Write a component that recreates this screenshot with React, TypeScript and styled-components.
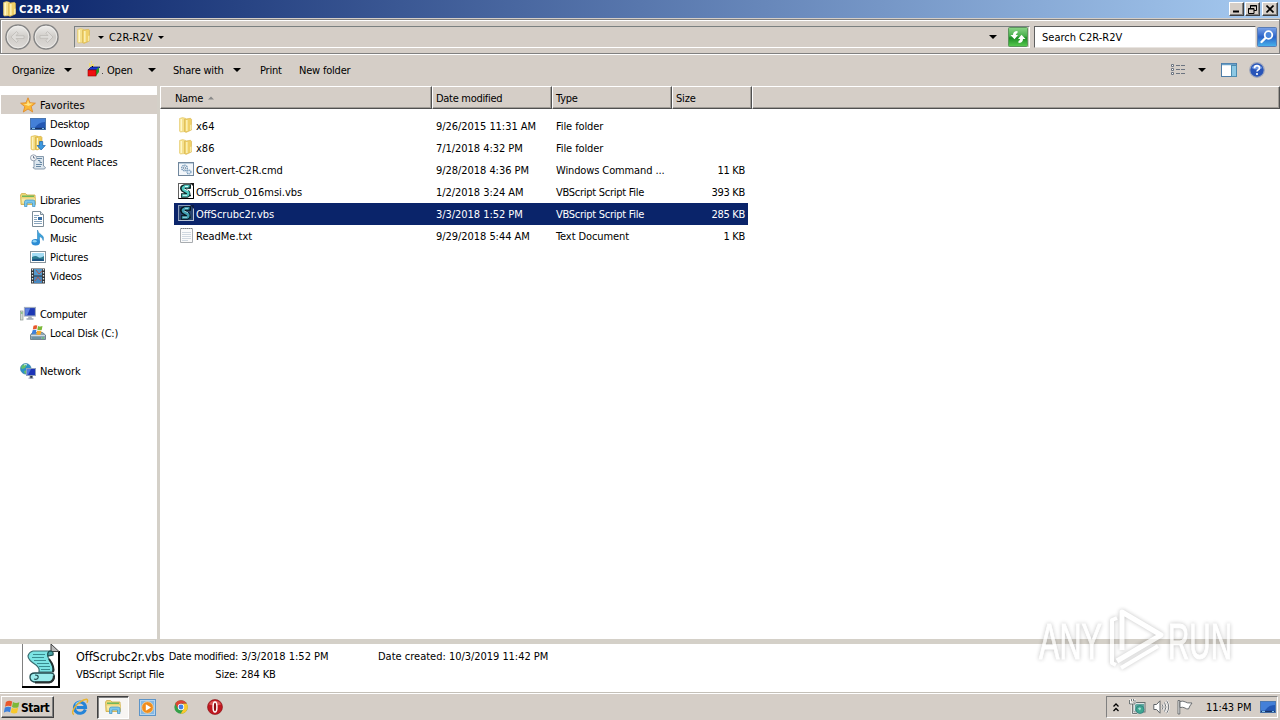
import React from 'react'
import styled, { createGlobalStyle, css } from 'styled-components'

const face = '#d5cec7'
const navy = '#0a246a'
const shadow = '#808080'

const GlobalStyle = createGlobalStyle`
  * { box-sizing: border-box; }
  body {
    margin: 0;
    background: ${face};
    color: #000;
    font-family: 'DejaVu Sans Condensed', 'DejaVu Sans', sans-serif;
    font-stretch: condensed;
    font-size: 11px;
  }
  svg { display: block; flex: none; }
`

const Desktop = styled.div`
  position: relative;
  display: flex;
  flex-direction: column;
  width: 1280px;
  height: 720px;
  overflow: hidden;
`

const Label = styled.span<{ $track?: number }>`
  display: block;
  padding-top: 2px;
  white-space: pre;
  line-height: 16px;
  letter-spacing: ${({ $track }) => $track ?? -0.2}px;
`

/* title bar */

const TitleBar = styled.div`
  display: flex;
  flex: none;
  align-items: center;
  height: 18px;
  padding: 0 2px 0 2px;
  background: linear-gradient(90deg, ${navy}, #a6caf0);
  color: #fff;
  font-weight: bold;
`

const TitleText = styled(Label)`
  flex: 1;
  padding-left: 1px;
`

const raised = css`
  background: ${face};
  border: 1px solid;
  border-color: #fff #404040 #404040 #fff;
  box-shadow: inset -1px -1px 0 ${shadow};
`

const CaptionButton = styled.div<{ $gap?: boolean }>`
  ${raised}
  display: flex;
  align-items: center;
  justify-content: center;
  width: ${({ $gap }) => ($gap ? 16 : 15)}px;
  height: 14px;
  margin-left: ${({ $gap }) => ($gap ? 2 : 1)}px;
`

/* address bar */

const AddressBar = styled.div`
  display: flex;
  flex: none;
  align-items: center;
  height: 35px;
  margin-top: 1px;
  padding: 1px 0 0 3px;
  border: 1px solid ${shadow};
  box-shadow: inset 1px 1px 0 #fff, 0 1px 0 #fff;
`

const AddressField = styled.div`
  display: flex;
  align-items: center;
  width: 956px;
  height: 22px;
  margin-left: 14px;
  padding: 0 1px;
  border: 1px solid;
  border-color: #7a8080 #fff #fff #7a8080;
`

const FieldIcon = styled.div`
  padding-bottom: 2px;
`

const SearchField = styled.div`
  display: flex;
  align-items: center;
  width: 222px;
  height: 22px;
  margin: 0 1px 0 4px;
  padding-left: 7px;
  background: #fff;
  border: 1px solid;
  border-color: #606060 #e8e4e0 #e8e4e0 #606060;
`

const Spacer = styled.div`
  flex: 1;
`

const Caret = styled.i<{ $size?: number; $left?: number; $right?: number }>`
  width: 0;
  height: 0;
  margin-left: ${({ $left }) => $left || 0}px;
  margin-right: ${({ $right }) => $right || 0}px;
  border: ${({ $size }) => $size || 4}px solid transparent;
  border-top-color: #000;
  border-bottom-width: 0;
`

/* toolbar */

const Toolbar = styled.div`
  display: flex;
  flex: none;
  align-items: center;
  height: 32px;
  padding: 0 15px 0 12px;
`

const ToolItem = styled.div<{ $width: number }>`
  display: flex;
  align-items: center;
  width: ${({ $width }) => $width}px;
`

/* body */

const Body = styled.div`
  display: flex;
  flex: none;
  height: 553px;
`

const NavPane = styled.div`
  width: 157px;
  padding-top: 9px;
  background: #fff;
`

const NavRow = styled.div<{ $child?: boolean; $selected?: boolean }>`
  display: flex;
  align-items: center;
  gap: 4px;
  height: 19px;
  margin-left: 1px;
  padding-left: ${({ $child }) => ($child ? 29 : 19)}px;
  background: ${({ $selected }) => ($selected ? face : 'transparent')};

  ${Label} {
    padding-top: 3px;
  }
`

const NavGap = styled.div`
  height: 19px;
`

const Splitter = styled.div`
  width: 3px;
  background: #d4d0c8;
`

const ListPane = styled.div`
  flex: 1;
  background: #fff;
`

const HeaderRow = styled.div`
  display: flex;
  height: 23px;
`

const HeaderCell = styled.div<{ $width?: number; $pad?: number }>`
  display: flex;
  align-items: center;
  gap: 5px;
  flex: ${({ $width }) => ($width ? `0 0 ${$width}px` : 1)};
  padding: 1px 0 0 ${({ $pad }) => $pad ?? 3}px;
  background: ${face};
  border: 1px solid;
  border-color: #fff #505050 #505050 #fff;
  box-shadow: inset -1px -1px 0 #a09c96;
`

const Rows = styled.div`
  padding: 6px 0 0 14px;
`

const FileRow = styled.div<{ $selected?: boolean }>`
  display: grid;
  grid-template-columns: 262px 120px 114px 78px;
  align-items: center;
  width: 574px;
  height: 22px;
  color: ${({ $selected }) => ($selected ? '#fff' : '#000')};
  background: ${({ $selected }) => ($selected ? navy : 'transparent')};
`

const NameCell = styled.div`
  display: flex;
  align-items: center;
  gap: 2px;
  padding-left: 4px;

  svg {
    margin-bottom: 2px;
  }
`

const SizeCell = styled.div`
  padding-right: 3px;
  text-align: right;
`

/* details pane */

const DetailsPane = styled.div`
  display: flex;
  flex: none;
  height: 54px;
  border-top: 5px solid #d4d0c8;
  border-bottom: 1px solid #c4c0b8;
  background: #fff;
`

const DetailIcon = styled.div`
  padding-left: 21px;
  width: 76px;
`

const DetailColumn = styled.div<{ $width: number; $right?: boolean }>`
  display: flex;
  flex-direction: column;
  width: ${({ $width }) => $width}px;
  padding-top: 3px;
  text-align: ${({ $right }) => ($right ? 'right' : 'left')};
`

const FileTitle = styled(Label)`
  font-size: 12.5px;
`

/* taskbar */

const Taskbar = styled.div`
  display: flex;
  flex: none;
  align-items: center;
  height: 27px;
  padding: 0 2px 0 1px;
  border-top: 1px solid #fff;
`

const StartButton = styled.div`
  ${raised}
  display: flex;
  align-items: center;
  gap: 1px;
  width: 53px;
  height: 22px;
  margin-right: 12px;
  padding-left: 2px;
  font-size: 12px;
  font-weight: bold;
`

const TaskButton = styled.div<{ $active?: boolean; $gap: number }>`
  display: flex;
  align-items: center;
  justify-content: center;
  width: ${({ $active }) => ($active ? 32 : 28)}px;
  height: 23px;
  margin-right: ${({ $gap }) => $gap}px;
  border: 1px solid transparent;
  ${({ $active }) =>
    $active &&
    css`
      background: #f7f5f2;
      border-color: #404040 #fff #fff #404040;
      box-shadow: inset 1px 1px 0 ${shadow};
    `}
`

const Tray = styled.div`
  display: flex;
  align-items: center;
  width: 172px;
  height: 22px;
  padding-left: 6px;
  border: 1px solid;
  border-color: ${shadow} #fff #fff ${shadow};
`

const TrayIcon = styled.div<{ $width: number }>`
  width: ${({ $width }) => $width}px;
`

const Watermark = styled.div`
  position: absolute;
  left: 1034px;
  top: 604px;
  opacity: 0.7;
  filter: drop-shadow(0 0 2px rgba(0, 0, 0, 0.34));
`

/* icons */

const FolderIcon = () => (
  <svg width="16" height="16" viewBox="0 0 16 16">
    <path d="M1.500 1.500 4.500.5l3 .8V14.500l-5 .5-1-.8z" fill="#f5e08c" stroke="#e4c866" strokeWidth=".6" />
    <path d="M6.500 2.200 12.500 1.300l1 1V13l-5.500 2.400-1.500-.8z" fill="#efd068" stroke="#d4b04c" strokeWidth=".6" />
    <path d="M3.300 2v12" stroke="#fff6c8" strokeWidth="1.500" />
    <path d="M8.800 3v11" stroke="#fbeeb0" strokeWidth="1.700" />
    <path d="M12 8l1.500-.5v5L12 13.500z" fill="#f8e8a4" />
  </svg>
)

const NavCircle = ({ forward }: { forward?: boolean }) => (
  <svg width="28" height="28" viewBox="0 0 28 28">
    <defs>
      <linearGradient id="disc" x1="0" y1="0" x2="0" y2="1">
        <stop offset="0" stopColor="#f0efed" />
        <stop offset=".5" stopColor="#cfccc8" />
        <stop offset="1" stopColor="#dedbd8" />
      </linearGradient>
    </defs>
    <circle cx="14" cy="14" r="12" fill="url(#disc)" stroke="#858585" strokeWidth="1.500" />
    <circle cx="14" cy="14" r="10.800" fill="none" stroke="#f2f1ef" strokeWidth=".8" />
    <path
      transform={forward ? 'rotate(180 14 14)' : undefined}
      d="M7 14l5.500-5.500 1.700 1.700L12 12.700h8v2.800h-8l2.200 2.300-1.700 1.700z"
      fill="#dedcd9"
      stroke="#bab7b3"
      strokeWidth=".7"
    />
  </svg>
)

const RefreshIcon = () => (
  <svg width="20" height="20" viewBox="0 0 20 20">
    <defs>
      <linearGradient id="leaf" x1="0" y1="0" x2="0" y2="1">
        <stop offset="0" stopColor="#8cd488" />
        <stop offset=".45" stopColor="#48b04c" />
        <stop offset=".55" stopColor="#1c8c24" />
        <stop offset="1" stopColor="#58cc50" />
      </linearGradient>
    </defs>
    <rect x=".5" y=".5" width="19" height="19" rx="1" fill="url(#leaf)" stroke="#5c945c" />
    <path d="M9.500 4Q5 4 5 8H2.500L6.500 12.300 10 8H7.800Q8 6.300 9.500 6z" fill="#fff" />
    <path d="M10.500 16Q15 16 15 12H17.500L13.500 7.700 10 12H12.200Q12 13.700 10.500 14z" fill="#fff" />
  </svg>
)

const SearchIcon = () => (
  <svg width="20" height="20" viewBox="0 0 20 20">
    <defs>
      <linearGradient id="glass" x1="0" y1="0" x2="0" y2="1">
        <stop offset="0" stopColor="#7da4e8" />
        <stop offset=".5" stopColor="#2a62c8" />
        <stop offset="1" stopColor="#48b4ec" />
      </linearGradient>
    </defs>
    <rect x=".5" y=".5" width="19" height="19" rx="1" fill="url(#glass)" stroke="#5a7cb4" />
    <circle cx="11.500" cy="8" r="3.800" fill="#4a86dc" stroke="#fff" strokeWidth="1.800" />
    <path d="M8.500 11 4.500 15" stroke="#fff" strokeWidth="2.400" strokeLinecap="round" />
  </svg>
)

const OpenIcon = () => (
  <svg width="18" height="18" viewBox="0 0 18 18">
    <path d="M2 3h1M4 1h1M4 4h3M2 5h2M6 6h1" stroke="#f4e060" strokeWidth="1.300" />
    <path d="M5 5.500h1" stroke="#000" />
    <path d="M1 9l3-3h9l-3 3z" fill="#1438d8" stroke="#001060" strokeWidth=".7" />
    <path d="M9 9l3-3v5l-3 4z" fill="#28982c" />
    <rect x="1" y="9" width="8" height="6" fill="#f01010" stroke="#900" strokeWidth=".6" />
    <path d="M15 12.500h1" stroke="#444" />
  </svg>
)

const ViewIcon = () => (
  <svg width="16" height="14" viewBox="0 0 16 14" fill="none" stroke="#6c7480">
    <path d="M1.500 1.500h2v2h-2zM1.500 5.500h2v2h-2zM1.500 9.500h2v2h-2z" fill="#fff" />
    <path d="M6 2.500h4m1 0h4M6 6.500h4m1 0h4M6 10.500h4m1 0h4" />
  </svg>
)

const PreviewIcon = () => (
  <svg width="17" height="14" viewBox="0 0 17 14">
    <rect x=".5" y=".5" width="15" height="13" fill="#fff" stroke="#4c7ca8" />
    <path d="M1 1.500h14" stroke="#68a0c8" strokeWidth="1.500" />
    <rect x="10.500" y="2.500" width="5" height="11" fill="#8cc8e4" stroke="#4c8cb0" />
  </svg>
)

const HelpIcon = () => (
  <svg width="16" height="16" viewBox="0 0 16 16">
    <circle cx="8" cy="8" r="7.300" fill="#2854b8" stroke="#a0a8bc" strokeWidth="1.200" />
    <path d="M2.500 6a6 5 0 0 1 11 0q-5 3-11 0z" fill="#6c94e0" />
    <path d="M5.500 6.200c0-3.400 5-3.200 5-.3C10.500 8 8 7.700 8 9.600" fill="none" stroke="#fff" strokeWidth="1.700" />
    <circle cx="8" cy="12" r="1.100" fill="#fff" />
  </svg>
)

const StarIcon = () => (
  <svg width="16" height="16" viewBox="0 0 16 16">
    <path
      d="M8 .8l2 5 5.400.4-4.200 3.400 1.500 5.400L8 12l-4.700 3 1.500-5.400L.6 6.200 6 5.800z"
      fill="#fcb834"
      stroke="#e08c2c"
      strokeWidth=".9"
    />
    <path d="M8 3l1 3.600H13L8.500 9 3.500 7H7z" fill="#fee488" />
  </svg>
)

const MonitorIcon = () => (
  <svg width="16" height="16" viewBox="0 0 16 16">
    <rect x=".5" y="2.500" width="15" height="11" fill="#2458b4" stroke="#4c78b0" />
    <path d="M1 3h14v3Q8 6 4 13H1z" fill="#4480d8" />
    <path d="M1 12.500h14" stroke="#183468" strokeWidth="1.400" />
    <path d="M2 12.500h3M12 12.500h2" stroke="#80c0ec" />
  </svg>
)

const DownloadsIcon = () => (
  <svg width="16" height="16" viewBox="0 0 16 16">
    <path d="M1 1.500 5 .5l3 .8V14l-5 1-2-.8z" fill="#f3dc80" stroke="#dcb94e" strokeWidth=".6" />
    <path d="M5.500 2 11 1.300l1 1V13l-5 2-1.500-.8z" fill="#ecca5a" stroke="#d0a93c" strokeWidth=".6" />
    <path d="M2.700 2v12M7.500 3v11" stroke="#fff6c8" strokeWidth="1.200" />
    <path d="M9.500 6.500h3.200v4h2.600L11.100 15 7 10.500h2.500z" fill="#3c98e0" stroke="#1c64ac" strokeWidth=".7" />
  </svg>
)

const RecentIcon = () => (
  <svg width="16" height="16" viewBox="0 0 16 16">
    <path d="M4 2.500h9.500v9.500l2 1.500-1 1.500H4.500L3 13.500h1z" fill="#dce6ee" stroke="#7c90a4" strokeWidth=".9" />
    <path d="M7 4.500h5M8 6.500h2v2h2M6 10.500h6M6 12.500h5" fill="none" stroke="#6888a4" />
    <circle cx="3.500" cy="3.800" r="3" fill="#f4f6f8" stroke="#8c98a8" strokeWidth=".9" />
    <path d="M3.500 2v2h1.500" fill="none" stroke="#506078" strokeWidth=".8" />
  </svg>
)

const LibraryIcon = () => (
  <svg width="16" height="16" viewBox="0 0 16 16">
    <path d="M.6 3 1.500 1.600h4L7 3h8l.4 9.500H1z" fill="#f4dc7c" stroke="#cca840" strokeWidth=".8" />
    <path d="M2 4.200h12" stroke="#58b058" strokeWidth="1.300" />
    <path d="M1 6h14.500l-.6 6H2z" fill="#f9eaa4" stroke="#dcc060" strokeWidth=".6" />
    <path d="M4.500 14.500V9.800q0-1.800 2-1.800h6.500q2 0 2 1.800v4.700h-2.500V11H7v3.500z" fill="#7cc8ec" stroke="#3c90c4" strokeWidth=".7" />
  </svg>
)

const DocumentIcon = () => (
  <svg width="16" height="16" viewBox="0 0 16 16">
    <path d="M2.500.5h8l3 3v12h-11z" fill="#fff" stroke="#7c8c98" />
    <path d="M10.500.5v3h3" fill="#dce4ea" stroke="#7c8c98" />
    <path d="M4 4.500h5M4 6.500h3M4 8.500h3M4 10.500h8M4 12.500h8" stroke="#88a4bc" />
    <rect x="8" y="6" width="4" height="3" fill="#346ca4" />
  </svg>
)

const MusicIcon = () => (
  <svg width="16" height="16" viewBox="0 0 16 16">
    <path d="M7.500 0q.5 3 3.500 4.500 3.500 2 2.200 6Q12.500 7 9.500 6.500V12h-2z" fill="#3ca4dc" stroke="#1c74b4" strokeWidth=".5" />
    <ellipse cx="5.700" cy="12.200" rx="4.200" ry="3.200" fill="#2c8cd4" />
    <ellipse cx="4.700" cy="11.300" rx="2" ry="1.200" fill="#90d4f4" />
  </svg>
)

const PictureIcon = () => (
  <svg width="16" height="16" viewBox="0 0 16 16">
    <rect x=".5" y="2.500" width="15" height="11" fill="#fff" stroke="#88949c" />
    <rect x="2" y="4" width="12" height="8" fill="#a4dcf4" />
    <path d="M2 8q4-2 6 0t6-1v5H2z" fill="#2c7c90" />
    <path d="M2 10.500q6-1.500 12 0V12H2z" fill="#1c5484" />
  </svg>
)

const VideoIcon = () => (
  <svg width="16" height="16" viewBox="0 0 16 16">
    <rect x="1" y=".5" width="14" height="15" fill="#303438" />
    <rect x="4" y="1" width="8" height="6.500" fill="#5498cc" />
    <rect x="4" y="8.500" width="8" height="6.500" fill="#4888c0" />
    <path d="M6 2l3 4 3-3M5 13l3-4 3 4" stroke="#b0584c" fill="none" />
    <path d="M2.500 1v14M13.500 1v14" stroke="#e4e8ec" strokeWidth="1.300" strokeDasharray="1.500 1.500" />
  </svg>
)

const ComputerIcon = () => (
  <svg width="16" height="16" viewBox="0 0 16 16">
    <rect x=".5" y="5" width="2.500" height="9" fill="#d4dcd4" stroke="#8c9890" strokeWidth=".7" />
    <path d="M1 7h1.500" stroke="#40b040" />
    <rect x="4.500" y="1.500" width="11" height="8.500" fill="#1c38b4" stroke="#a0acc0" strokeWidth="1.200" />
    <path d="M5.200 2.200h5L7 9.400H5.200z" fill="#5c80e0" />
    <path d="M8.500 10.500h3l.5 2H8z" fill="#a8b0bc" />
    <path d="M6.500 13h7" stroke="#8c98a8" strokeWidth="1.300" />
  </svg>
)

const DiskIcon = () => (
  <svg width="16" height="16" viewBox="0 0 16 16">
    <path d="M.5 10l2-2.500h10l3 2.500v4.500H.5z" fill="#8ca4b4" stroke="#60747f" strokeWidth=".8" />
    <path d="M1 10.500h14" stroke="#d0dce4" />
    <path d="M2 13h9" stroke="#5c8898" strokeWidth="1.200" />
    <path d="M12 13h2" stroke="#50d050" strokeWidth="1.200" />
    <path d="M3.500.8Q5.500-.3 7.300.6L6.500 4.300Q5 3.600 2.800 4.600z" fill="#e8582c" />
    <path d="M8 .9q2 1 4.500.2L11.700 5q-2.200.8-4.400-.3z" fill="#7cb838" />
    <path d="M2.600 5.300q2-1 3.800-.2L5.700 9q-2-.8-4 .2z" fill="#3c80dc" />
    <path d="M7.100 5.500q2 1 4.400.2L10.700 9.600q-2.200.8-4.400-.3z" fill="#f8a82c" />
  </svg>
)

const NetworkIcon = () => (
  <svg width="16" height="16" viewBox="0 0 16 16">
    <circle cx="5.800" cy="5.800" r="5.300" fill="#2c90c8" stroke="#4080a8" strokeWidth=".7" />
    <path d="M2 2.500q3-2 5-1L5 5 2.500 6 1 5zM4 8l3-1 1 2-3 2z" fill="#64c06c" />
    <path d="M4 2q2-1 3 0" stroke="#d8f4f8" fill="none" />
    <rect x="6.500" y="5.500" width="9" height="7" fill="#1c34b8" stroke="#90a0bc" />
    <path d="M7 6h4l-3 6H7z" fill="#5078e0" />
    <path d="M10 13h2.500v2H10zM8.500 15.200h5" stroke="#7c88a0" strokeWidth=".8" />
  </svg>
)

const CmdIcon = () => (
  <svg width="16" height="16" viewBox="0 0 16 16">
    <rect x=".5" y="1.500" width="15" height="13" fill="#f2f6fa" stroke="#70869c" />
    <path d="M1 2.500h14" stroke="#b8ccdc" />
    <circle cx="6.500" cy="7" r="2.800" fill="#fff" stroke="#7498b8" strokeWidth="1.400" strokeDasharray="1.500 .6" />
    <circle cx="6.500" cy="7" r="1.200" fill="none" stroke="#587898" strokeWidth=".7" />
    <circle cx="11" cy="11" r="2" fill="#dce8f4" stroke="#7498b8" strokeWidth="1.200" strokeDasharray="1.200 .5" />
  </svg>
)

const ScriptIcon = ({ selected }: { selected?: boolean }) => (
  <svg width="16" height="16" viewBox="0 0 16 16">
    <rect x=".5" y=".5" width="15" height="15" fill={selected ? '#284470' : '#fff'} stroke={selected ? '#8c9cb8' : '#606060'} />
    <path d="M15.500 2v13.500H.5" fill="none" stroke={selected ? '#b8c4d4' : '#000'} />
    <path d="M12 0h4v4z" fill={selected ? '#0c1c44' : '#181818'} />
    <path
      d="M13 3.500H6.500Q3 4.500 5 6.800L9.800 9.500q1 2.500-.8 3H3"
      fill="none"
      stroke={selected ? '#04141c' : '#0c2828'}
      strokeWidth="4.600"
    />
    <path d="M11.500 3.400H7Q3.800 4.500 5.500 6.800L10 9.300q1 2.500-1 3.200H3.800" fill="none" stroke={selected ? '#409cb0' : '#50c8c0'} strokeWidth="2.600" />
    <path d="M7 3.500h3M6 5.800l4 2M5 12.300h4" stroke={selected ? '#a0dce4' : '#e8ffff'} strokeWidth=".9" />
    <path d="M10.500 5.500l1.500-1M11 12.500h2" stroke="#0c2828" strokeWidth="1.500" />
  </svg>
)

const TextIcon = () => (
  <svg width="16" height="16" viewBox="0 0 16 16">
    <path d="M2.500 1.500h12v14h-12z" fill="#fafafa" stroke="#a8acb0" />
    <path d="M3 1.500h11" stroke="#787c80" strokeDasharray="1 1" />
    <path d="M4 5.500h9M4 7.500h9M4 9.500h9M4 11.500h9M4 13.500h6" stroke="#d0d8e0" />
  </svg>
)

const BigScriptIcon = () => (
  <svg width="40" height="45" viewBox="0 0 40 45">
    <path d="M1 0h29l8 8v35.500H1z" fill="#fff" />
    <path d="M1.500 0v43" stroke="#808080" />
    <path d="M38 7v36H1" fill="none" stroke="#000" strokeWidth="2" />
    <path d="M30 0v7.500h8z" fill="#b8b8b8" stroke="#404040" />
    <path
      d="M12 7h17q-4 4-1 8 5 8 4 13H18q1-4-3-7-8-5-8-9 1-4 5-5z"
      fill="#7ce4e4"
      stroke="#386c70"
      strokeWidth="1.200"
    />
    <path d="M29 7q4 0 3 4l-5 1q-1-4 2-5z" fill="#48a0a4" stroke="#184848" strokeWidth="1.100" />
    <path d="M28 15q6 8 4 13" fill="none" stroke="#203030" strokeWidth="2" />
    <path d="M14 29h16q4 0 3 5-1 4-5 4H13q-4-1-4-5t5-4z" fill="#9cecec" stroke="#204c50" strokeWidth="1.300" />
    <path d="M14 31q4 0 3 3-1 2-4 1" fill="none" stroke="#204c50" strokeWidth="1.200" />
    <path d="M12 10.500h12M11 13.500h12M13 16.500h12M16 19.500h12M18 22.500h11M20 25.500h9" stroke="#388c90" strokeWidth="1.100" />
    <path d="M14 38.500h14q5-1 5-7" fill="none" stroke="#283030" strokeWidth="2.200" />
  </svg>
)

const WindowsFlag = () => (
  <svg width="16" height="16" viewBox="-1.500 -1 17 17">
    <path d="M.5 2.200Q4-.1 7.200 1.700L6.200 7Q3 5.300-.4 7.300z" fill="#e8582c" />
    <path d="M8 2.200q3 1.800 6.800.2L13.700 7.700Q10.300 9.200 7 7.400z" fill="#7cb838" />
    <path d="M-.6 8.100Q3 6.300 6 7.800L4.900 13.100Q2 11.500-1.700 13.400z" fill="#3c80dc" />
    <path d="M6.800 8.200q3 1.700 6.700.2l-1.100 5.300q-3.300 1.500-6.700-.3z" fill="#f8c82c" />
  </svg>
)

const IeIcon = () => (
  <svg width="18" height="18" viewBox="0 0 18 18">
    <path d="M14.300 11.500A5.600 5.600 0 1 1 14.600 9.500H5.500" fill="none" stroke="#2484d8" strokeWidth="3" />
    <path d="M4.500 6.500Q6 4 9 3.600" stroke="#8cd0f8" strokeWidth="1.300" fill="none" />
    <path d="M3 16.500Q-.3 15.500 4 9 9.500 2 15.500 1.200q2 .3.500 3.500" fill="none" stroke="#e8b430" strokeWidth="1.400" />
  </svg>
)

const WmpIcon = () => (
  <svg width="17" height="17" viewBox="0 0 17 17">
    <rect x=".5" y=".5" width="16" height="16" fill="#b4d4f0" stroke="#5c94c8" />
    <rect x="2" y="2" width="13" height="13" fill="#84b8e4" />
    <circle cx="8.500" cy="8.500" r="5.800" fill="#f08c1c" stroke="#fcd8a0" strokeWidth=".8" />
    <path d="M6.800 5.200 12 8.500l-5.200 3.300z" fill="#fff" />
  </svg>
)

const ChromeIcon = () => (
  <svg width="14" height="14" viewBox="0 0 14 14">
    <circle cx="7" cy="7" r="6.700" fill="#34a048" />
    <path d="M1.200 3.700A6.700 6.700 0 0 1 12.900 3.800H7L4.200 8.800z" fill="#dc4434" />
    <path d="M12.900 3.800A6.700 6.700 0 0 1 6.700 13.700L9.800 8.500 9 3.800z" fill="#fcc82c" />
    <circle cx="7" cy="7" r="3.200" fill="#fff" />
    <circle cx="7" cy="7" r="2.400" fill="#4080e4" />
  </svg>
)

const OperaIcon = () => (
  <svg width="16" height="16" viewBox="0 0 16 16">
    <circle cx="8" cy="8" r="7.500" fill="#c01820" stroke="#841014" strokeWidth=".6" />
    <path d="M2 5.500a6.500 6 0 0 1 12 0q-6 2-12 0z" fill="#dc5858" />
    <ellipse cx="8" cy="8" rx="1.900" ry="5" fill="#8c0c10" stroke="#fff" strokeWidth="1.500" />
  </svg>
)

const TrayNetwork = () => (
  <svg width="17" height="16" viewBox="0 0 17 16">
    <rect x="4.500" y="3.500" width="11.500" height="9.500" fill="#dce4e4" stroke="#687070" />
    <rect x="6" y="5" width="9" height="7" fill="#60a8a0" />
    <path d="M1 .500v4h5v-4M3.500 5v9.500H8M2.500 0v2M4.500 0v2" fill="none" stroke="#f8f8f8" strokeWidth="2.200" />
    <path d="M.5 1v4h5.500V1M3.500 5v9.500H8M2.500 0v2M4.500 0v2" fill="none" stroke="#505858" strokeWidth=".8" />
    <circle cx="11" cy="10.500" r="4" fill="#40a890" stroke="#307c80" strokeWidth=".8" />
    <path d="M9 9.500q2-2 3 0l-1 2z" fill="#a8e0e0" />
  </svg>
)

const SoundIcon = () => (
  <svg width="17" height="16" viewBox="0 0 17 16" fill="none">
    <path d="M.8 5.500h2.700L7 1.800v12.400L3.500 10.500H.8z" fill="#fff" stroke="#606468" />
    <path d="M9.300 5.500q1.500 2.500 0 5M11.500 3.500q3 4.500 0 9M13.700 1.800q4 6.200 0 12.400" stroke="#fff" strokeWidth="2" />
    <path d="M9.300 5.500q1.500 2.500 0 5M11.500 3.500q3 4.500 0 9M13.700 1.800q4 6.200 0 12.400" stroke="#707478" />
  </svg>
)

const FlagIcon = () => (
  <svg width="16" height="16" viewBox="0 0 16 16">
    <path d="M1 1.500h1.800v13.500H1z" fill="#fff" stroke="#606468" strokeWidth=".9" />
    <path d="M3 2.500q3-1 5.500.5 1 1.200 6.500 1-2.500 3-3.500 6-2.500 0-3.500-1-2-1.200-5-.5z" fill="#fff" stroke="#606468" strokeWidth=".9" />
  </svg>
)

const AnyRunLogo = () => (
  <svg width="204" height="74" viewBox="0 0 204 74" overflow="visible">
    <g fill="#fff" stroke="#fff" strokeWidth="1" fontFamily="'Liberation Sans', sans-serif" fontSize="50">
      <text x="5" y="55" textLength="63" lengthAdjust="spacingAndGlyphs">ANY</text>
      <text x="134" y="55" textLength="64" lengthAdjust="spacingAndGlyphs">RUN</text>
    </g>
    <g fill="none" stroke="#fff" strokeWidth="5" strokeLinejoin="round">
      <path d="M88 46V8l39 23-44 26" />
      <path d="M83 14l-5 2v43l4 2" strokeWidth="4" />
      <path d="M87 64l37-22" strokeWidth="4" />
    </g>
  </svg>
)

type NavEntry = { text: string; icon: React.FC; child?: boolean; selected?: boolean; track?: number }

const navGroups: NavEntry[][] = [
  [
    { text: 'Favorites', icon: StarIcon, selected: true, track: 0 },
    { text: 'Desktop', icon: MonitorIcon, child: true, track: -0.2 },
    { text: 'Downloads', icon: DownloadsIcon, child: true },
    { text: 'Recent Places', icon: RecentIcon, child: true, track: -0.1 },
  ],
  [
    { text: 'Libraries', icon: LibraryIcon, track: -0.3 },
    { text: 'Documents', icon: DocumentIcon, child: true, track: -0.3 },
    { text: 'Music', icon: MusicIcon, child: true, track: -0.3 },
    { text: 'Pictures', icon: PictureIcon, child: true, track: -0.1 },
    { text: 'Videos', icon: VideoIcon, child: true },
  ],
  [
    { text: 'Computer', icon: ComputerIcon, track: -0.3 },
    { text: 'Local Disk (C:)', icon: DiskIcon, child: true },
  ],
  [{ text: 'Network', icon: NetworkIcon, track: -0.1 }],
]

type FileEntry = {
  name: string
  date: string
  type: string
  size?: string
  icon: React.FC<{ selected?: boolean }>
  selected?: boolean
  typeTrack?: number
}

const files: FileEntry[] = [
  { name: 'x64', date: '9/26/2015 11:31 AM', type: 'File folder', icon: FolderIcon, typeTrack: -0.1 },
  { name: 'x86', date: '7/1/2018 4:32 PM', type: 'File folder', icon: FolderIcon, typeTrack: -0.1 },
  { name: 'Convert-C2R.cmd', date: '9/28/2018 4:36 PM', type: 'Windows Command ...', size: '11 KB', icon: CmdIcon, typeTrack: -0.12 },
  { name: 'OffScrub_O16msi.vbs', date: '1/2/2018 3:24 AM', type: 'VBScript Script File', size: '393 KB', icon: ScriptIcon, typeTrack: -0.27 },
  {
    name: 'OffScrubc2r.vbs',
    date: '3/3/2018 1:52 PM',
    type: 'VBScript Script File',
    size: '285 KB',
    icon: ScriptIcon,
    selected: true,
    typeTrack: -0.27,
  },
  { name: 'ReadMe.txt', date: '9/29/2018 5:44 AM', type: 'Text Document', size: '1 KB', icon: TextIcon, typeTrack: -0.1 },
]

const App = () => (
  <Desktop>
    <GlobalStyle />
    <TitleBar>
      <FolderIcon />
      <TitleText $track={0.3}>C2R-R2V</TitleText>
      <CaptionButton>
        <svg width="9" height="8"><path d="M1 6.500h6" stroke="#000" strokeWidth="2" /></svg>
      </CaptionButton>
      <CaptionButton>
        <svg width="9" height="9" fill="none" stroke="#000"><path d="M2.500 3V.5h6v5H6M2 1h7M.5 3.500h5.500v5H.5zM0 4h6" /></svg>
      </CaptionButton>
      <CaptionButton $gap>
        <svg width="8" height="8"><path d="M.5.500l7 7M7.500.500l-7 7" stroke="#000" strokeWidth="1.600" /></svg>
      </CaptionButton>
    </TitleBar>

    <AddressBar>
      <NavCircle />
      <NavCircle forward />
      <AddressField>
        <FieldIcon><FolderIcon /></FieldIcon>
        <Caret $size={3} $left={6} $right={5} />
        <Label $track={0.1}>C2R-R2V</Label>
        <Caret $size={3} $left={5} />
        <Spacer />
        <Caret $right={11} />
        <RefreshIcon />
      </AddressField>
      <SearchField>
        <Label $track={0}>Search C2R-R2V</Label>
      </SearchField>
      <SearchIcon />
    </AddressBar>

    <Toolbar>
      <ToolItem $width={52}><Label>Organize</Label></ToolItem>
      <ToolItem $width={23}><Caret /></ToolItem>
      <ToolItem $width={20}><OpenIcon /></ToolItem>
      <ToolItem $width={41}><Label>Open</Label></ToolItem>
      <ToolItem $width={25}><Caret /></ToolItem>
      <ToolItem $width={60}><Label>Share with</Label></ToolItem>
      <ToolItem $width={27}><Caret /></ToolItem>
      <ToolItem $width={39}><Label>Print</Label></ToolItem>
      <ToolItem $width={60}><Label>New folder</Label></ToolItem>
      <Spacer />
      <ToolItem $width={28}><ViewIcon /></ToolItem>
      <ToolItem $width={23}><Caret /></ToolItem>
      <ToolItem $width={28}><PreviewIcon /></ToolItem>
      <HelpIcon />
    </Toolbar>

    <Body>
      <NavPane>
        {navGroups.map((group, i) => (
          <React.Fragment key={i}>
            {i > 0 && <NavGap />}
            {group.map(({ text, icon: Icon, child, selected, track }) => (
              <NavRow key={text} $child={child} $selected={selected}>
                <Icon />
                <Label $track={track}>{text}</Label>
              </NavRow>
            ))}
          </React.Fragment>
        ))}
      </NavPane>
      <Splitter />
      <ListPane>
        <HeaderRow>
          <HeaderCell $width={272} $pad={14}>
            <Label $track={-0.3}>Name</Label>
            <svg width="6" height="4"><path d="M0 3.500h6L3 .5z" fill="#888" /></svg>
          </HeaderCell>
          <HeaderCell $width={120}><Label $track={-0.3}>Date modified</Label></HeaderCell>
          <HeaderCell $width={120}><Label>Type</Label></HeaderCell>
          <HeaderCell $width={80}><Label>Size</Label></HeaderCell>
          <HeaderCell />
        </HeaderRow>
        <Rows>
          {files.map(({ name, date, type, size, icon: Icon, selected, typeTrack }) => (
            <FileRow key={name} $selected={selected}>
              <NameCell>
                <Icon selected={selected} />
                <Label $track={0}>{name}</Label>
              </NameCell>
              <Label $track={-0.05}>{date}</Label>
              <Label $track={typeTrack}>{type}</Label>
              <SizeCell><Label $track={-0.3}>{size}</Label></SizeCell>
            </FileRow>
          ))}
        </Rows>
      </ListPane>
    </Body>

    <DetailsPane>
      <DetailIcon><BigScriptIcon /></DetailIcon>
      <DetailColumn $width={92}>
        <FileTitle $track={-0.05}>OffScrubc2r.vbs</FileTitle>
        <Label $track={-0.27}>VBScript Script File</Label>
      </DetailColumn>
      <DetailColumn $width={70} $right>
        <Label $track={-0.3}>Date modified:</Label>
        <Label>Size:</Label>
      </DetailColumn>
      <DetailColumn $width={140}>
        <Label $track={0}> 3/3/2018 1:52 PM</Label>
        <Label $track={-0.1}> 284 KB</Label>
      </DetailColumn>
      <DetailColumn $width={71}>
        <Label $track={0}>Date created:</Label>
      </DetailColumn>
      <DetailColumn $width={110}>
        <Label $track={-0.05}>10/3/2019 11:42 PM</Label>
      </DetailColumn>
    </DetailsPane>

    <Taskbar>
      <StartButton>
        <WindowsFlag />
        <Label $track={-0.5}>Start</Label>
      </StartButton>
      <TaskButton $gap={3}><IeIcon /></TaskButton>
      <TaskButton $gap={4} $active><LibraryIcon /></TaskButton>
      <TaskButton $gap={6}><WmpIcon /></TaskButton>
      <TaskButton $gap={6}><ChromeIcon /></TaskButton>
      <TaskButton $gap={0}><OperaIcon /></TaskButton>
      <Spacer />
      <Tray>
        <TrayIcon $width={16}>
          <svg width="6" height="9" fill="none" stroke="#000" strokeWidth="1.300"><path d="M.5 3.500 3 1l2.500 2.500M.5 8 3 5.500 5.500 8" /></svg>
        </TrayIcon>
        <TrayIcon $width={24}><TrayNetwork /></TrayIcon>
        <TrayIcon $width={24}><SoundIcon /></TrayIcon>
        <TrayIcon $width={29}><FlagIcon /></TrayIcon>
        <TrayIcon $width={54}><Label $track={-0.1}>11:43 PM</Label></TrayIcon>
        <MonitorIcon />
      </Tray>
    </Taskbar>

    <Watermark>
      <AnyRunLogo />
    </Watermark>
  </Desktop>
)

export default App
